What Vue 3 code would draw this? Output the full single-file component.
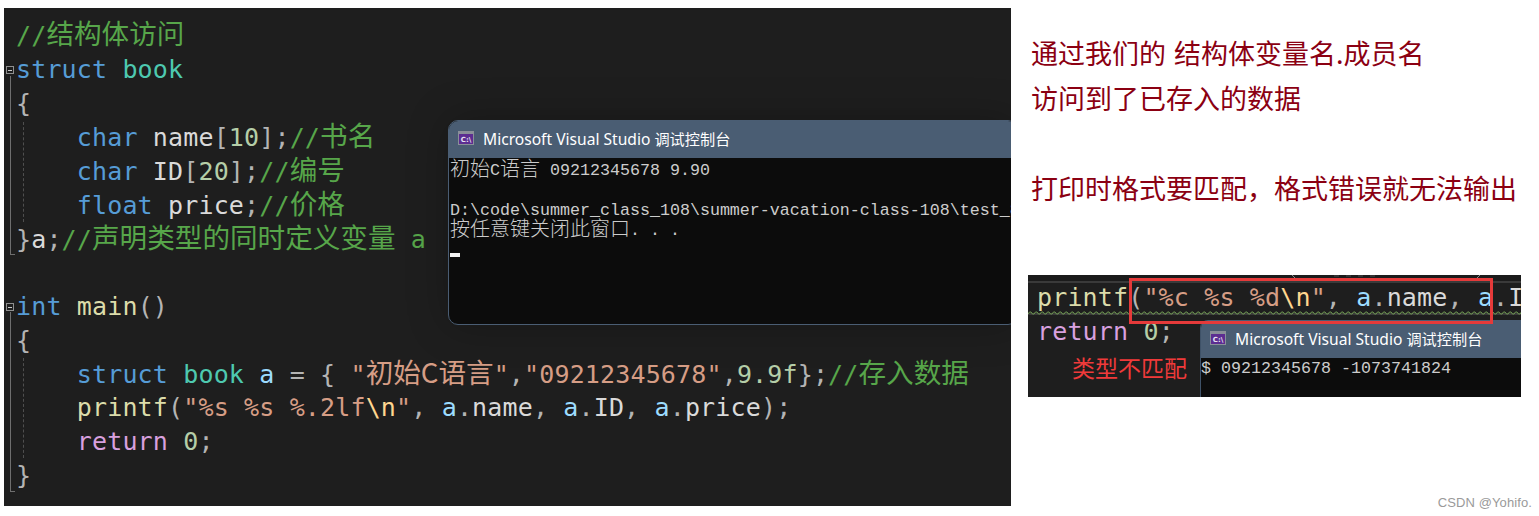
<script setup>
const lines = [
  [['cm', '//'], ['cm cjk', '结构体访问']],
  [['kw', 'struct'], ['', ' '], ['ty', 'book']],
  [['pn', '{']],
  [['', '    '], ['kw', 'char'], ['', ' '], ['fd', 'name'], ['pn', '['], ['nu', '10'], ['pn', '];'], ['cm', '//'], ['cm cjk', '书名']],
  [['', '    '], ['kw', 'char'], ['', ' '], ['fd', 'ID'], ['pn', '['], ['nu', '20'], ['pn', '];'], ['cm', '//'], ['cm cjk', '编号']],
  [['', '    '], ['kw', 'float'], ['', ' '], ['fd', 'price'], ['pn', ';'], ['cm', '//'], ['cm cjk', '价格']],
  [['pn', '}'], ['fd', 'a'], ['pn', ';'], ['cm', '//'], ['cm cjk', '声明类型的同时定义变量'], ['cm', ' a']],
  [['', ' ']],
  [['kw', 'int'], ['', ' '], ['fn', 'main'], ['pn', '()']],
  [['pn', '{']],
  [['', '    '], ['kw', 'struct'], ['', ' '], ['ty', 'book'], ['', ' '], ['va', 'a'], ['pn', ' = { '], ['st', '"'], ['st cjk', '初始C语言'], ['st', '"'], ['pn', ','], ['st', '"09212345678"'], ['pn', ','], ['nu', '9.9f'], ['pn', '};'], ['cm', '//'], ['cm cjk', '存入数据']],
  [['', '    '], ['fn', 'printf'], ['pn', '('], ['st', '"%s %s %.2lf'], ['es', '\\n'], ['st', '"'], ['pn', ', '], ['va', 'a'], ['pn', '.'], ['fd', 'name'], ['pn', ', '], ['va', 'a'], ['pn', '.'], ['fd', 'ID'], ['pn', ', '], ['va', 'a'], ['pn', '.'], ['fd', 'price'], ['pn', ');']],
  [['', '    '], ['rt', 'return'], ['', ' '], ['nu', '0'], ['pn', ';']],
  [['pn', '}']],
]
const snippetTop = [['fn', 'printf'], ['pn', '('], ['st', '"%c %s %d'], ['es', '\\n'], ['st', '"'], ['pn', ', '], ['va', 'a'], ['pn', '.'], ['fd', 'name'], ['pn', ', '], ['va', 'a'], ['pn', '.'], ['fd', 'ID']]
const snippetNext = [['rt', 'return'], ['', ' '], ['nu', '0'], ['pn', ';']]
</script>

<template>
  <div class="page">
    <section class="editor">
      <div class="code">
        <div v-for="(line, i) in lines" :key="i" class="line">
          <span v-for="(t, j) in line" :key="j" :class="t[0]">{{ t[1] }}</span>
        </div>
      </div>

      <span class="fold box-a"></span>
      <span class="rail rail-a"></span>
      <span class="guide guide-a"></span>
      <span class="fold box-b"></span>
      <span class="rail rail-b"></span>
      <span class="guide guide-b"></span>

      <div class="console big">
        <header class="title">
          <svg class="cmd" viewBox="0 0 16 14" width="16" height="14">
            <rect x="0" y="0" width="16" height="14" fill="#8a8f99" />
            <rect x="1" y="3" width="14" height="10" fill="#5c2d91" />
            <text x="8" y="10.6" text-anchor="middle" class="cmd-text">C:\</text>
          </svg>
          <span>Microsoft Visual Studio <span class="zh">调试控制台</span></span>
        </header>
        <div class="output">
          <div><span class="zh-out">初始</span>C<span class="zh-out">语言</span> 09212345678 9.90</div>
          <div>&nbsp;</div>
          <div>D:\code\summer_class_108\summer-vacation-class-108\test_8_21</div>
          <div><span class="zh-out">按任意键关闭此窗口</span>. . .</div>
          <div class="cursor-row"><span class="cursor"></span></div>
        </div>
      </div>
    </section>

    <aside class="side">
      <div class="notes">
        <p>通过我们的 结构体变量名.成员名</p>
        <p>访问到了已存入的数据</p>
        <p>&nbsp;</p>
        <p>打印时格式要匹配&#xFF0C;格式错误就无法输出</p>
      </div>

      <div class="snippet">
        <svg class="snip-strip" width="493" height="6">
          <path d="M264 0 L267 3 M452 0 L449 3" fill="none" stroke="#8a8a8a" stroke-width="1" />
          <path d="M306 1 L352 1" fill="none" stroke="#4a4a4a" stroke-width="1" stroke-dasharray="5 7" />
        </svg>
        <div class="snip-line current">
          <span v-for="(t, j) in snippetTop" :key="j" :class="t[0]">{{ t[1] }}</span>
          <svg class="squiggle" width="493" height="4">
            <defs>
              <pattern id="sq" width="6" height="4" patternUnits="userSpaceOnUse">
                <path d="M0 3 L1.5 1 L3 1 L4.5 3 L6 3" fill="none" stroke="#6f9a52" stroke-width="1" />
              </pattern>
            </defs>
            <rect width="493" height="4" fill="url(#sq)" />
          </svg>
        </div>
        <div class="snip-line">
          <span v-for="(t, j) in snippetNext" :key="j" :class="t[0]">{{ t[1] }}</span>
        </div>
        <div class="mismatch">类型不匹配</div>

        <div class="console small">
          <header class="title">
            <svg class="cmd" viewBox="0 0 16 14" width="16" height="14">
              <rect x="0" y="0" width="16" height="14" fill="#8a8f99" />
              <rect x="1" y="3" width="14" height="10" fill="#5c2d91" />
              <text x="8" y="10.6" text-anchor="middle" class="cmd-text">C:\</text>
            </svg>
            <span>Microsoft Visual Studio <span class="zh">调试控制台</span></span>
          </header>
          <div class="output">$ 09212345678 -1073741824</div>
        </div>

        <div class="redbox"></div>
      </div>
    </aside>

    <div class="mark">CSDN @Yohifo.</div>
  </div>
</template>

<style>
html, body { margin: 0; background: #fff; }
</style>

<style scoped>
.page {
  position: relative;
  display: flex;
  width: 1539px;
  height: 516px;
  overflow: hidden;
  background: #fff;
}
.editor {
  position: relative;
  flex: none;
  width: 1007px;
  height: 498px;
  margin: 8px 0 0 4px;
  background: #1e1e1e;
  overflow: hidden;
}
.code {
  padding: 11px 0 0 12px;
  font-family: "DejaVu Sans Mono", "Noto Sans CJK SC", monospace;
  font-size: 25px;
  letter-spacing: 0.15px;
}
.line {
  height: 34px;
  line-height: 34px;
  white-space: pre;
  color: #dadada;
}
.line:nth-child(8),
.line:nth-child(11) { height: 33px; }
.cjk {
  font-family: "Noto Sans CJK SC", sans-serif;
  font-size: 27.6px;
  line-height: 0;
  letter-spacing: 0;
}
.cm { color: #57a64a; }
.kw { color: #569cd6; }
.ty { color: #4ec9b0; }
.va { color: #9cdcfe; }
.fd { color: #dadada; }
.fn { color: #dcdcaa; }
.st { color: #d69d85; }
.es { color: #ffd68f; }
.rt { color: #d8a0df; }
.nu { color: #b5cea8; }
.pn { color: #b4b4b4; }

.fold {
  position: absolute;
  left: 2px;
  width: 6px;
  height: 6px;
  border: 1px solid #8f8f8f;
  box-sizing: content-box;
}
.fold::after {
  content: "";
  position: absolute;
  left: 1px;
  right: 1px;
  top: 3px;
  height: 1px;
  background: #c8c8c8;
}
.box-a { top: 58px; }
.box-b { top: 295px; }
.rail {
  position: absolute;
  left: 6px;
  width: 4px;
  border-left: 1px solid #6e6e6e;
  border-bottom: 1px solid #6e6e6e;
}
.rail-a { top: 68px; height: 178px; }
.rail-b { top: 304px; height: 179px; }
.guide {
  position: absolute;
  left: 19px;
  border-left: 1px dashed #4f4f4f;
}
.guide-a { top: 114px; height: 100px; }
.guide-b { top: 350px; height: 100px; }

.console {
  position: absolute;
  overflow: hidden;
  background: #0c0c0c;
  color: #cccccc;
}
.big {
  left: 444px;
  top: 112px;
  width: 570px;
  height: 205px;
  box-sizing: border-box;
  border: 1px solid #4a5d73;
  border-radius: 10px;
  box-shadow: 0 0 40px rgba(0, 0, 0, 0.25);
}
.title {
  display: flex;
  align-items: center;
  height: 38px;
  box-sizing: border-box;
  padding: 0 0 2px 10px;
  gap: 9px;
  background: #4a5d73;
  color: #fff;
  font-family: "Noto Sans", "Noto Sans CJK SC", sans-serif;
  font-size: 15.6px;
  white-space: nowrap;
}
.big .title { margin: -1px -1px 0; }
.zh { font-family: "Noto Sans CJK SC", sans-serif; font-size: 15.2px; }
.cmd { flex: none; }
.cmd-text { font: bold 7px "DejaVu Sans", sans-serif; fill: #e8e4f2; }
.output {
  font-family: "Liberation Mono", "Noto Sans CJK SC", monospace;
  font-size: 16.67px;
  line-height: 20px;
  white-space: nowrap;
  padding-left: 1px;
  padding-top: 3px;
}
.zh-out {
  position: relative;
  top: 1px;
  font-family: "Noto Sans CJK SC", sans-serif;
  font-size: 20px;
  font-weight: 300;
  line-height: 0;
}
.cursor-row { position: relative; height: 20px; }
.cursor { position: absolute; left: 0; top: 12px; width: 10px; height: 4px; background: #f2f2f2; }

.side {
  flex: none;
  padding: 30px 0 0 17px;
}
.notes {
  margin-left: 3px;
  color: #8b0012;
  font-family: "Noto Sans CJK SC", sans-serif;
  font-size: 27px;
  word-spacing: 2px;
  white-space: nowrap;
}
.notes p { margin: 0; height: 45px; line-height: 45px; }

.snippet {
  position: relative;
  margin-top: 65px;
  width: 493px;
  height: 122px;
  background: #1e1e1e;
  overflow: hidden;
  font-family: "DejaVu Sans Mono", "Noto Sans CJK SC", monospace;
  font-size: 25px;
  letter-spacing: 0.15px;
}
.snip-strip { display: block; height: 6px; background: #1b1b1b; }
.snip-line {
  position: relative;
  height: 34px;
  line-height: 34px;
  padding-left: 9px;
  white-space: pre;
  box-sizing: border-box;
}
.current {
  border-top: 2px solid #3a3a3a;
  border-bottom: 2px solid #3a3a3a;
  line-height: 30px;
}
.squiggle { position: absolute; left: 0; bottom: -2px; }
.mismatch {
  position: absolute;
  left: 44px;
  top: 77px;
  color: #f03a3a;
  font-family: "Noto Sans CJK SC", sans-serif;
  font-size: 23px;
  line-height: 30px;
  letter-spacing: 0;
  white-space: nowrap;
}
.small {
  left: 172px;
  top: 45px;
  width: 321px;
  height: 77px;
  box-sizing: border-box;
  border-left: 1px solid #3f5268;
  border-top-left-radius: 8px;
  letter-spacing: 0;
}
.small .title { margin-left: -1px; }
.small .output { padding-top: 1px; padding-left: 0; }
.redbox {
  position: absolute;
  left: 101px;
  top: 3px;
  width: 364px;
  height: 46px;
  box-sizing: border-box;
  border: 3px solid #e53a3a;
}
.mark {
  position: absolute;
  right: 7px;
  bottom: 6px;
  color: #9a9a9a;
  font-family: "Liberation Sans", sans-serif;
  font-size: 13px;
  letter-spacing: 0.1px;
  line-height: 14px;
  white-space: nowrap;
}
</style>
